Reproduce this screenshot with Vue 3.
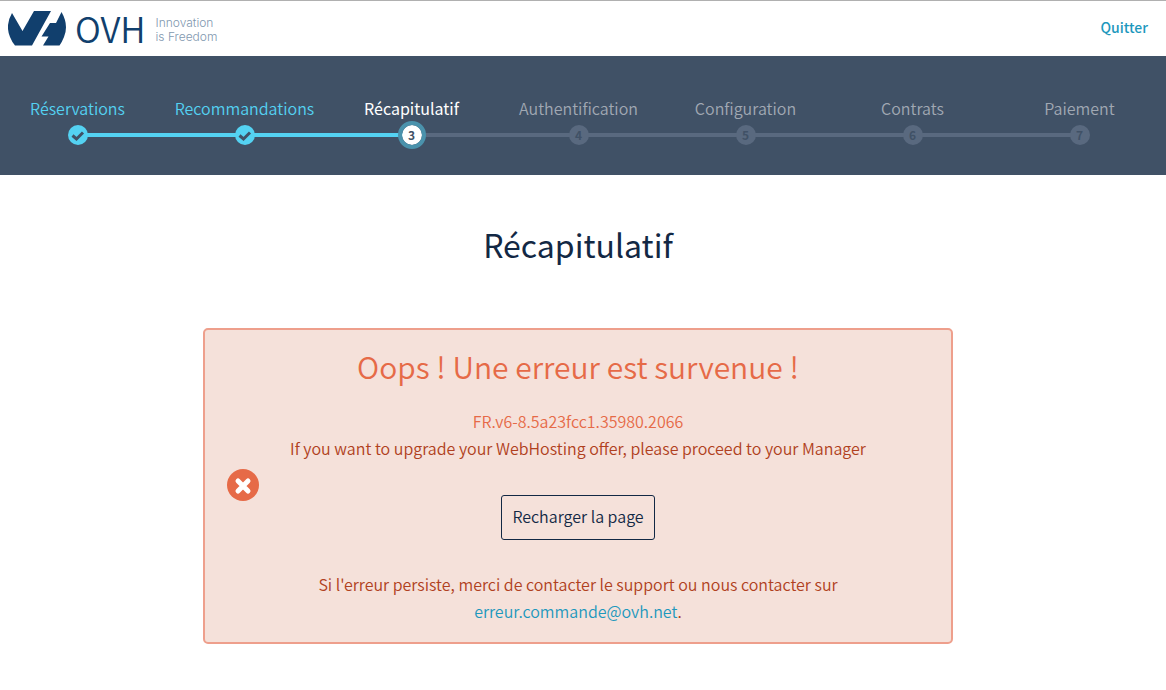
<script setup>
const steps = [
  { label: 'Réservations', state: 'done' },
  { label: 'Recommandations', state: 'done' },
  { label: 'Récapitulatif', state: 'current' },
  { label: 'Authentification', state: 'todo' },
  { label: 'Configuration', state: 'todo' },
  { label: 'Contrats', state: 'todo' },
  { label: 'Paiement', state: 'todo' },
]

function reload() {
  window.location.reload()
}
</script>

<template>
  <div class="page">
    <header class="topbar">
      <a class="brand" href="#">
        <svg class="brand-mark" viewBox="0 0 58 35" width="58" height="35" aria-hidden="true">
          <path d="M4 2 Q-3 14 2 26 Q4 31 7 34.500 H24 L43 0 H26 L14.500 20 Z" />
          <path d="M53.500 1 Q61 14 56 26 Q54 31 51.500 34.500 H35 L40.500 25.500 H33.500 L42 12 H48 Z" />
        </svg>
        <span class="brand-name">OVH</span>
        <span class="brand-tag">Innovation<br>is Freedom</span>
      </a>
      <a class="quit" href="#">Quitter</a>
    </header>

    <nav class="progress" aria-label="Étapes de la commande">
      <ol class="steps">
        <li v-for="(step, i) in steps" :key="step.label" class="step" :class="step.state">
          <span class="step-label">{{ step.label }}</span>
          <span class="bullet">
            <svg v-if="step.state === 'done'" viewBox="0 0 20 20" width="20" height="20" aria-hidden="true">
              <path d="M4.500 10.500 L8.500 14 L15 7.500" />
            </svg>
            <template v-else>{{ i + 1 }}</template>
          </span>
        </li>
      </ol>
    </nav>

    <main class="content">
      <h1 class="title">Récapitulatif</h1>
      <section class="alert" role="alert">
        <svg class="alert-icon" viewBox="0 0 32 32" width="32" height="32" aria-hidden="true">
          <circle cx="16" cy="16" r="16" />
          <path d="M11 12 L21 22 M21 12 L11 22" />
        </svg>
        <div class="alert-body">
          <h2 class="alert-title">Oops ! Une erreur est survenue !</h2>
          <p class="code">FR.v6-8.5a23fcc1.35980.2066</p>
          <p>If you want to upgrade your WebHosting offer, please proceed to your Manager</p>
          <button class="reload" type="button" @click="reload">Recharger la page</button>
          <p>
            Si l'erreur persiste, merci de contacter le support ou nous contacter sur
            <a href="mailto:erreur.commande@ovh.net">erreur.commande@ovh.net</a>.
          </p>
        </div>
      </section>
    </main>
  </div>
</template>

<style>
body {
  margin: 0;
  background: #fff;
}
</style>

<style scoped>
.page {
  font-family: "Noto Sans CJK SC", "Noto Sans", sans-serif;
  font-size: 16px;
  line-height: 27px;
}

a {
  text-decoration: none;
}

.topbar {
  display: flex;
  align-items: center;
  justify-content: space-between;
  box-sizing: border-box;
  height: 56px;
  padding: 0 18px 0 8px;
  border-top: 1px solid #b0b0b0;
}

.brand {
  display: flex;
  align-items: center;
  color: #113f6d;
}

.brand-mark {
  fill: #113f6d;
}

.brand-name {
  margin-left: 9px;
  padding-bottom: 2px;
  font-size: 35px;
  font-weight: 350;
  line-height: 36px;
}

.brand-tag {
  margin: 2px 0 0 10px;
  color: #7f98af;
  font-family: Inter, sans-serif;
  font-size: 12px;
  font-weight: 300;
  line-height: 14px;
}

.quit {
  padding-bottom: 2px;
  color: #1d98bd;
  font-size: 14px;
  font-weight: 500;
}

.progress {
  overflow: hidden;
  padding: 40px 0 26px;
  background: #405166;
}

.steps {
  display: flex;
  margin: 0 3px 0 -6px;
  padding: 0;
  list-style: none;
}

.step {
  position: relative;
  display: flex;
  flex: 1 1 0;
  flex-direction: column;
  align-items: center;
  min-width: 0;
  color: #a0a8b3;
  font-weight: 350;
}

.step + .step::before {
  content: "";
  position: absolute;
  right: 50%;
  bottom: 12px;
  width: 100%;
  height: 4px;
  background: #59697f;
}

.step-label {
  line-height: 25px;
}

.bullet {
  position: relative;
  z-index: 1;
  display: flex;
  align-items: center;
  justify-content: center;
  width: 20px;
  height: 20px;
  border: 4px solid transparent;
  border-radius: 50%;
  background: #59697f;
  background-clip: padding-box;
  color: #405166;
  font-size: 12px;
  font-weight: 700;
  line-height: 20px;
}

.done {
  color: #54d2f2;
}

.step.done::before,
.step.current::before {
  background: #54d2f2;
}

.done .bullet {
  background-color: #54d2f2;
}

.bullet path {
  fill: none;
  stroke: #405166;
  stroke-width: 3;
}

.current {
  color: #fff;
  font-weight: 400;
}

.current .bullet {
  border-color: #4a92ac;
  background-color: #fff;
}

.content {
  margin-right: 10px;
  padding: 45px 20px;
}

.title {
  margin: 0 0 60px;
  color: #122844;
  font-size: 32px;
  font-weight: 400;
  line-height: 48px;
  text-align: center;
}

.alert {
  display: grid;
  grid-template-columns: 32px 1fr 32px;
  column-gap: 20px;
  align-items: center;
  box-sizing: border-box;
  max-width: 750px;
  margin: 0 auto;
  padding: 15px 22px 17px;
  border: 2px solid #ee9f8c;
  border-radius: 5px;
  background: #f5e1da;
  color: #b04020;
  font-weight: 350;
}

.alert-icon circle {
  fill: #e66a47;
}

.alert-icon path {
  stroke: #fff;
  stroke-width: 5;
  stroke-linecap: round;
}

.alert-body {
  text-align: center;
}

.alert-body p {
  margin: 0;
}

.alert-body a {
  color: #1d98bd;
}

.alert-title {
  margin: 0 0 20px;
  color: #e66a47;
  font-size: 30px;
  font-weight: 350;
  line-height: 43px;
}

.alert-body .code {
  color: #e66a47;
}

.reload {
  height: 45px;
  margin: 33px 0 31px;
  padding: 0 10px 2px;
  border: 1px solid #122844;
  border-radius: 3px;
  background: transparent;
  color: #122844;
  font: inherit;
}
</style>
